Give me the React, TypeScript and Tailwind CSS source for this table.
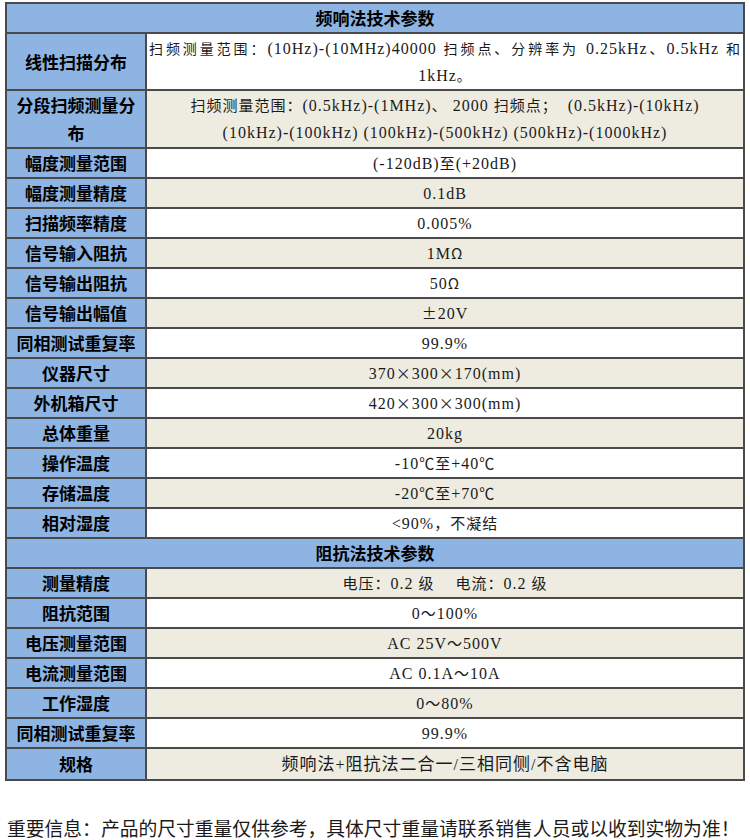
import React from "react";

type Row = { label: React.ReactNode; value: React.ReactNode; h?: string };

const sansCn = "font-['Noto_Sans_CJK_SC','Noto_Sans',sans-serif]";
const serifCn = "font-['Liberation_Serif','Noto_Sans_CJK_SC',serif]";

// full-width runs are set in the CJK face, the rest in a serif with some tracking
const WIDE = /([\u3000-\u303f\u4e00-\u9fff\uff00-\uffef×±Ω℃]+)/;

function Mixed({ text, size = "md" }: { text: string; size?: "sm" | "md" | "lg" }) {
  return (
    <>
      {text.split(WIDE).map((part, i) => {
        if (!part) return null;
        if (i % 2 === 0) {
          return (
            <span key={i} className="font-['Liberation_Serif',serif] text-[16px] tracking-[1px]">
              {part}
            </span>
          );
        }
        const cjk =
          size === "sm"
            ? "text-[14px] tracking-[1px]"
            : size === "lg"
              ? "text-[17px] tracking-[1px]"
              : "text-[15px] tracking-[1px]";
        return (
          <span key={i} className={`font-['Noto_Sans_CJK_SC',sans-serif] ${cjk}`}>
            {part}
          </span>
        );
      })}
    </>
  );
}

const freqRows: Row[] = [
  {
    label: "线性扫描分布",
    h: "h-[57px]",
    value: (
      <>
        <span className="block w-full text-left [text-align-last:justify]">
          <Mixed
            size="sm"
            text="扫频测量范围：(10Hz)-(10MHz)40000 扫频点、分辨率为 0.25kHz、0.5kHz 和"
          />
        </span>
        <span className="block">
          <Mixed size="sm" text="1kHz。" />
        </span>
      </>
    ),
  },
  {
    label: (
      <>
        分段扫频测量分
        <br />布
      </>
    ),
    h: "h-[58px]",
    value: (
      <>
        <span className="block whitespace-pre">
          <Mixed text="扫频测量范围：(0.5kHz)-(1MHz)、 2000 扫频点；  (0.5kHz)-(10kHz)" />
        </span>
        <span className="block whitespace-pre">
          <Mixed text="(10kHz)-(100kHz) (100kHz)-(500kHz) (500kHz)-(1000kHz)" />
        </span>
      </>
    ),
  },
  { label: "幅度测量范围", value: <Mixed text="(-120dB)至(+20dB)" /> },
  { label: "幅度测量精度", value: <Mixed text="0.1dB" /> },
  { label: "扫描频率精度", value: <Mixed text="0.005%" /> },
  { label: "信号输入阻抗", value: <Mixed text="1MΩ" /> },
  { label: "信号输出阻抗", value: <Mixed text="50Ω" /> },
  { label: "信号输出幅值", value: <Mixed text="±20V" /> },
  { label: "同相测试重复率", value: <Mixed text="99.9%" /> },
  { label: "仪器尺寸", value: <Mixed text="370×300×170(mm)" /> },
  { label: "外机箱尺寸", value: <Mixed text="420×300×300(mm)" /> },
  { label: "总体重量", value: <Mixed text="20kg" /> },
  { label: "操作温度", value: <Mixed text="-10℃至+40℃" /> },
  { label: "存储温度", value: <Mixed text="-20℃至+70℃" /> },
  { label: "相对湿度", value: <Mixed text="<90%，不凝结" /> },
];

const impRows: Row[] = [
  {
    label: "测量精度",
    value: (
      <span className="whitespace-pre">
        <Mixed text="电压：0.2 级　 电流：0.2 级" />
      </span>
    ),
  },
  { label: "阻抗范围", value: <Mixed text="0～100%" /> },
  { label: "电压测量范围", value: <Mixed text="AC 25V～500V" /> },
  { label: "电流测量范围", value: <Mixed text="AC 0.1A～10A" /> },
  { label: "工作湿度", value: <Mixed text="0～80%" /> },
  { label: "同相测试重复率", value: <Mixed text="99.9%" /> },
  { label: "规格", value: <Mixed size="lg" text="频响法+阻抗法二合一/三相同侧/不含电脑" /> },
];

function SectionHeader({ title }: { title: string }) {
  return (
    <div
      className={`flex h-[30px] items-center justify-center border-b-2 border-[#4a4a4a] bg-[#8db4e2] text-[17px] font-bold text-black ${sansCn}`}
    >
      {title}
    </div>
  );
}

function SpecRow({ row, shaded }: { row: Row; shaded: boolean }) {
  return (
    <div
      className={`grid grid-cols-[140px_1fr] border-b-2 border-[#4a4a4a] last:border-b-0 ${row.h ?? "h-[30px]"}`}
    >
      <div
        className={`flex items-center justify-center border-r-2 border-[#4a4a4a] bg-[#8db4e2] text-center text-[17px] font-bold leading-[28px] text-black ${sansCn}`}
      >
        <span>{row.label}</span>
      </div>
      <div
        className={`flex items-center px-[2px] text-[#1a1a1a] ${
          shaded ? "bg-[#eeece1]" : "bg-white"
        }`}
      >
        <div className="w-full text-center leading-[26px] whitespace-nowrap">{row.value}</div>
      </div>
    </div>
  );
}

export default function App() {
  return (
    <div className="min-h-[840px] w-[750px] bg-white pt-[2px]">
      <div className="ml-[5px] w-[740px] border-2 border-[#4a4a4a]">
        <SectionHeader title="频响法技术参数" />
        {freqRows.map((row, i) => (
          <SpecRow key={`f-${i}`} row={row} shaded={i % 2 === 1} />
        ))}
        <SectionHeader title="阻抗法技术参数" />
        {impRows.map((row, i) => (
          <SpecRow key={`i-${i}`} row={row} shaded={i % 2 === 0} />
        ))}
      </div>
      <p className={`mt-[36px] pl-[7px] text-[18.8px] leading-[26px] text-[#1a1a1a] ${serifCn}`}>
        重要信息：产品的尺寸重量仅供参考，具体尺寸重量请联系销售人员或以收到实物为准！
      </p>
    </div>
  );
}
